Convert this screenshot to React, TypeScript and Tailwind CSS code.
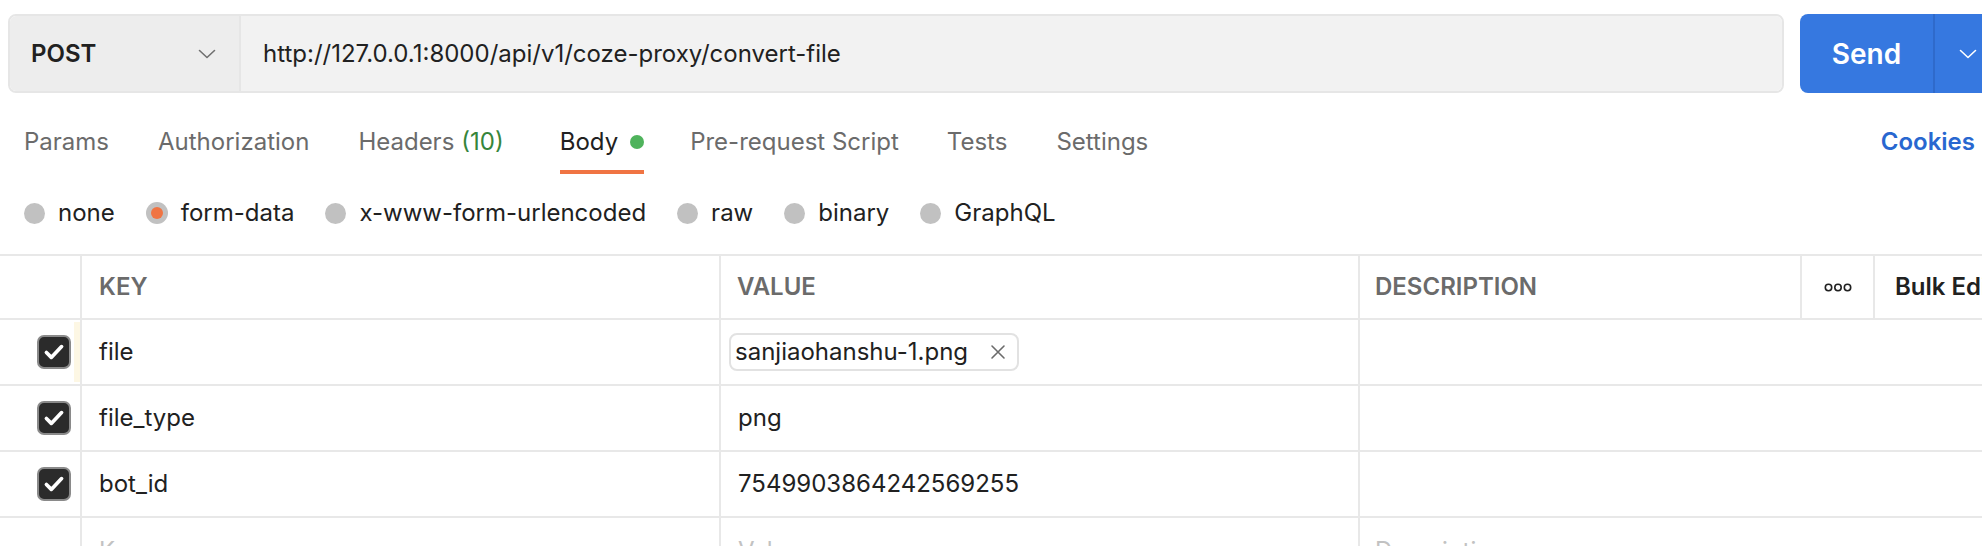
import React from "react";

function Chevron({ className, color, width = 18 }: { className?: string; color: string; width?: number }) {
  return (
    <svg className={className} width={width} height="10" viewBox="0 0 18 10" fill="none" stroke={color} strokeWidth="1.6" strokeLinecap="round" strokeLinejoin="round">
      <path d="M1.5 1.5l7.5 7 7.5-7" />
    </svg>
  );
}

function Checkbox() {
  return (
    <div className="flex h-[34px] w-[34px] items-center justify-center rounded-[7px] border-2 border-[#8a8a8a] bg-[#2b2b2b]">
      <svg width="26" height="26" viewBox="0 0 24 24" fill="none" stroke="white" strokeWidth="3.4" strokeLinecap="round" strokeLinejoin="round">
        <path d="M5 12.5l4.5 4.5L19 7" />
      </svg>
    </div>
  );
}

function Radio({ label, selected }: { label: string; selected?: boolean }) {
  return (
    <div className="flex items-center gap-[13px]">
      {selected ? (
        <span className="flex h-[22px] w-[22px] items-center justify-center rounded-full bg-[#c1c1c1]">
          <span className="h-[12px] w-[12px] rounded-full bg-[#f07443]" />
        </span>
      ) : (
        <span className="h-[21px] w-[21px] rounded-full bg-[#c1c1c1]" />
      )}
      <span className="leading-[32px]">{label}</span>
    </div>
  );
}

const rows = [
  { key: "file", value: "sanjiaohanshu-1.png", file: true, strip: true },
  { key: "file_type", value: "png" },
  { key: "bot_id", value: "7549903864242569255" },
];

const cell = "flex items-center border-l-2 border-[#e8e8e8]";
const cols = "grid grid-cols-[80px_639px_639px_442px_73px_227px]";

const tabs = [
  { label: "Params", cls: "" },
  { label: "Authorization", cls: "" },
  { label: "Headers", cls: "" },
  { label: "Body", cls: "ml-[7px]" },
  { label: "Pre-request Script", cls: "-ml-[3px]" },
  { label: "Tests", cls: "-ml-[1px]" },
  { label: "Settings", cls: "" },
];

export default function App() {
  return (
    <div className="h-[546px] w-[1982px] overflow-hidden bg-white font-['Inter',sans-serif] text-[24px] text-[#212121]">
      {/* request line */}
      <div className="flex gap-[16px] pl-[8px] pt-[14px]">
        <div className="flex h-[79px] w-[1776px] shrink-0 overflow-hidden rounded-[8px] border-2 border-[#e6e6e6]">
          <div className="flex w-[231px] items-center justify-between border-r-2 border-[#e6e6e6] bg-[#ededed] pl-[21px] pr-[23px]">
            <span className="font-semibold">POST</span>
            <Chevron color="#707070" />
          </div>
          <div className="flex flex-1 items-center bg-[#f2f2f2] pl-[22px]">
            http://127.0.0.1:8000/api/v1/coze-proxy/convert-file
          </div>
        </div>
        <div className="flex h-[79px] w-[200px] shrink-0 rounded-[8px] bg-[#3678e0] text-white">
          <div className="flex w-[135px] items-center justify-center border-r-2 border-[#2f6acb] text-[28px] font-semibold">Send</div>
          <div className="flex flex-1 items-center justify-center">
            <Chevron color="white" />
          </div>
        </div>
      </div>

      {/* tabs */}
      <div className="mt-[33px] flex items-end pl-[24px] pr-[7px]">
        <div className="flex items-end gap-[49px]">
          {tabs.map((t) => (
            <div
              key={t.label}
              className={`flex items-center border-b-4 pb-[12px] leading-[32px] ${t.cls} ${t.label === "Body" ? "border-[#f07443] text-[#212121]" : "border-transparent text-[#6b6b6b]"}`}
            >
              <span>{t.label}</span>
              {t.label === "Headers" && <span className="ml-[7px] text-[#36853b]">(10)</span>}
              {t.label === "Body" && <span className="ml-[12px] h-[14px] w-[14px] rounded-full bg-[#4fb35c]" />}
            </div>
          ))}
        </div>
        <div className="ml-auto border-b-4 border-transparent pb-[12px] font-semibold leading-[32px] text-[#2867d0]">Cookies</div>
      </div>

      {/* body type */}
      <div className="mt-[23px] flex items-center gap-[31px] pl-[24px]">
        <Radio label="none" />
        <Radio label="form-data" selected />
        <Radio label="x-www-form-urlencoded" />
        <Radio label="raw" />
        <Radio label="binary" />
        <Radio label="GraphQL" />
      </div>

      {/* table */}
      <div className="mt-[25px] w-[2100px] border-t-2 border-[#e8e8e8]">
        <div className={`${cols} h-[64px] border-b-2 border-[#e8e8e8] font-semibold text-[#6b6b6b]`}>
          <div />
          <div className={`${cell} pl-[17px]`}>KEY</div>
          <div className={`${cell} pl-[16px]`}>VALUE</div>
          <div className={`${cell} pl-[15px]`}>DESCRIPTION</div>
          <div className={`${cell} justify-center`}>
            <svg width="28" height="9" viewBox="0 0 28 9" fill="none" stroke="#212121" strokeWidth="1.6">
              <circle cx="4.5" cy="4.5" r="3.2" />
              <circle cx="14" cy="4.5" r="3.2" />
              <circle cx="23.5" cy="4.5" r="3.2" />
            </svg>
          </div>
          <div className={`${cell} whitespace-nowrap pl-[20px] text-[#212121]`}>Bulk Edit</div>
        </div>
        {rows.map((r) => (
          <div key={r.key} className={`${cols} h-[66px] border-b-2 border-[#e8e8e8]`}>
            <div className="flex items-stretch justify-end">
              <div className="mr-[3px] flex items-center">
                <Checkbox />
              </div>
              <div className={`my-[2px] w-[6px] ${r.strip ? "bg-[#fdf7e4]" : ""}`} />
            </div>
            <div className={`${cell} pl-[17px]`}>{r.key}</div>
            <div className={`${cell} ${r.file ? "pl-[8px]" : "pl-[17px]"}`}>
              {r.file ? (
                <div className="flex h-[38px] items-center gap-[22px] rounded-[8px] border-2 border-[#e2e2e2] pl-[4px] pr-[11px]">
                  <span>{r.value}</span>
                  <svg width="16" height="16" viewBox="0 0 16 16" fill="none" stroke="#6b6b6b" strokeWidth="1.6" strokeLinecap="round">
                    <path d="M2 2l12 12M14 2L2 14" />
                  </svg>
                </div>
              ) : (
                r.value
              )}
            </div>
            <div className={`${cell} col-span-3`} />
          </div>
        ))}
        <div className={`${cols} h-[66px] text-[#c2c2c2]`}>
          <div />
          <div className={`${cell} pl-[17px]`}>Key</div>
          <div className={`${cell} pl-[17px]`}>Value</div>
          <div className={`${cell} col-span-3 pl-[15px]`}>Description</div>
        </div>
      </div>
    </div>
  );
}
